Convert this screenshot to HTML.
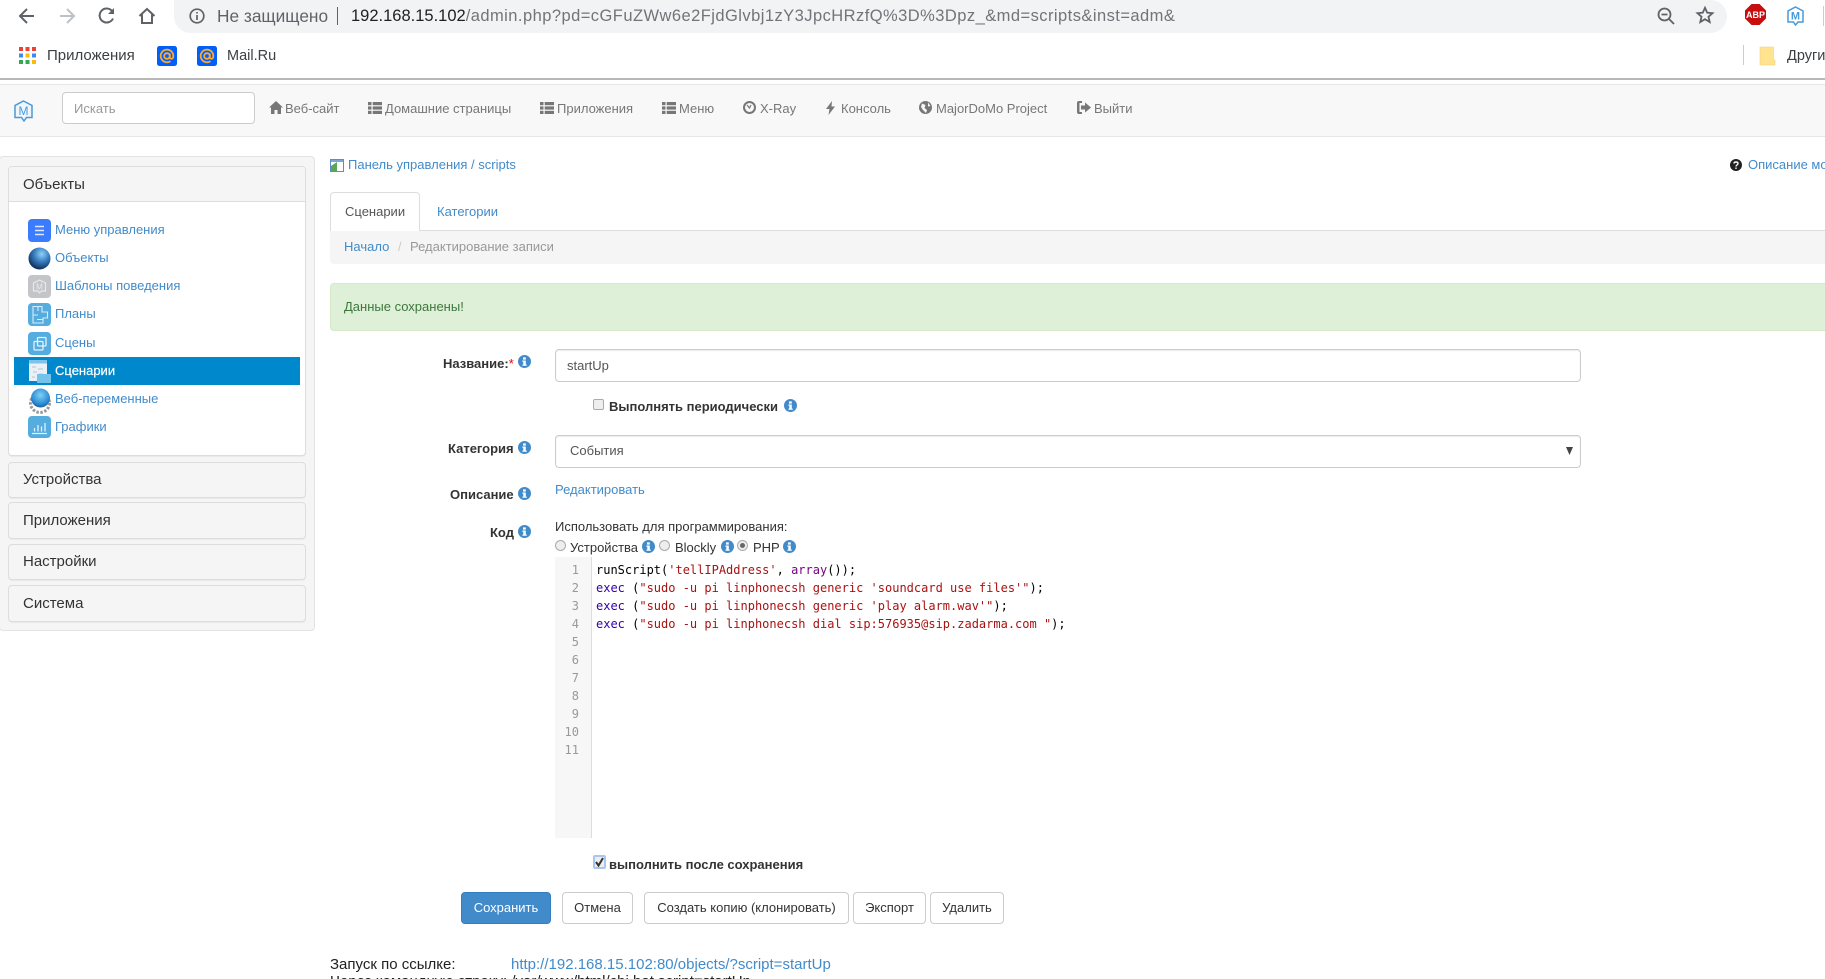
<!DOCTYPE html>
<html lang="ru">
<head>
<meta charset="utf-8">
<title>scripts</title>
<style>
html,body{margin:0;padding:0;background:#fff;width:1825px;height:979px;overflow:hidden;font-family:"Liberation Sans",Arial,sans-serif;font-size:13px;color:#333}
#w{position:relative;width:1825px;height:979px;overflow:hidden}
.a{position:absolute}
.t{position:absolute;white-space:nowrap;line-height:20px;height:20px;margin-top:1px}
.t.c{margin-top:0}
a,.l{color:#428bca;text-decoration:none}
.n{color:#777}
.b{font-weight:bold}
svg{position:absolute;display:block;overflow:visible}
.panel{position:absolute;left:8px;width:298px;background:#f5f5f5;border:1px solid #ddd;border-radius:4px;box-shadow:0 1px 1px rgba(0,0,0,.05);box-sizing:border-box}
.ph{position:absolute;left:23px;font-size:15px;line-height:20px;white-space:nowrap;color:#333;margin-top:1px}
.btn{position:absolute;top:892px;height:32px;line-height:29px;box-sizing:border-box;border:1px solid #ccc;border-radius:4px;text-align:center;background:#fff;color:#333;white-space:nowrap}
.code{position:absolute;left:596px;font-family:"DejaVu Sans Mono","Liberation Mono",monospace;font-size:12px;line-height:18px;height:18px;white-space:pre;color:#000}
.ln{position:absolute;left:555px;width:24px;text-align:right;font-family:"DejaVu Sans Mono","Liberation Mono",monospace;font-size:12px;line-height:18px;color:#999}
.s{color:#a11}.k{color:#30a}.f{color:#708}
.sel{position:absolute;left:555px;width:1026px;height:33px;box-sizing:border-box;border:1px solid #ccc;border-radius:4px;background:#fff;box-shadow:inset 0 1px 1px rgba(0,0,0,.075)}
</style>
</head>
<body>
<div id="w">
<svg width="0" height="0" style="position:absolute">
<defs>
<symbol id="info" viewBox="0 0 13 13"><circle cx="6.500" cy="6.500" r="6.500" fill="#428bca"/><rect x="5" y="2.400" width="2.800" height="2.200" fill="#fff"/><path d="M4.400 5.500H7.800V9.600H8.800V10.800H4.400V9.600H5.300V6.700H4.400Z" fill="#fff"/></symbol>
<symbol id="list" viewBox="0 0 14 12"><g fill="#777"><rect x="0" y="0" width="3.500" height="3.200"/><rect x="0" y="4.400" width="3.500" height="3.200"/><rect x="0" y="8.800" width="3.500" height="3.200"/><rect x="4.700" y="0" width="9.300" height="3.200"/><rect x="4.700" y="4.400" width="9.300" height="3.200"/><rect x="4.700" y="8.800" width="9.300" height="3.200"/></g></symbol>
</defs>
</svg>

<!-- Browser chrome -->
<div class="a" style="left:174px;top:0;width:1553px;height:33px;background:#f1f3f4;border-radius:0 17px 17px 17px"></div>
<svg style="left:17px;top:7px" width="20" height="18" viewBox="0 0 20 18" fill="none" stroke="#5f6368" stroke-width="2"><path d="M17 9H3M10 2L3 9L10 16"/></svg>
<svg style="left:58px;top:7px" width="20" height="18" viewBox="0 0 20 18" fill="none" stroke="#bdc1c6" stroke-width="2"><path d="M2 9H16M9 2L16 9L9 16"/></svg>
<svg style="left:98px;top:7px" width="18" height="18" viewBox="0 0 18 18" fill="none" stroke="#5f6368" stroke-width="2"><path d="M15 11.500A7 7 0 1 1 14 4"/><path d="M16 1V7H10" fill="#5f6368" stroke="none"/></svg>
<svg style="left:138px;top:7px" width="18" height="18" viewBox="0 0 18 18" fill="none" stroke="#5f6368" stroke-width="2"><path d="M1.500 9L9 2L16.500 9M4 7.500V16H14V7.500"/></svg>
<svg style="left:189px;top:8px" width="16" height="16" viewBox="0 0 16 16" fill="none" stroke="#5f6368" stroke-width="1.700"><circle cx="8" cy="8" r="6.800"/><path d="M8 7V12M8 4V5.500"/></svg>
<div class="t c" style="left:217px;top:6px;font-size:17.300px;color:#5f6368">Не защищено</div>
<div class="a" style="left:337px;top:7px;width:1px;height:18px;background:#5f6368"></div>
<div class="t c" style="left:351px;top:6px;font-size:16.500px;color:#70757a"><span style="color:#202124">192.168.15.102</span><span style="letter-spacing:.45px">/admin.php?pd=cGFuZWw6e2FjdGlvbj1zY3JpcHRzfQ%3D%3Dpz_&amp;md=scripts&amp;inst=adm&amp;</span></div>
<svg style="left:1657px;top:7px" width="18" height="18" viewBox="0 0 18 18" fill="none" stroke="#5f6368" stroke-width="1.800"><circle cx="7.500" cy="7.500" r="6"/><path d="M4.500 7.500H10.500M12 12L17 17"/></svg>
<svg style="left:1696px;top:6px" width="18" height="18" viewBox="0 0 18 18" fill="none" stroke="#5f6368" stroke-width="1.800"><path d="M9 1.800L11.200 6.700L16.500 7.200L12.500 10.700L13.700 16L9 13.200L4.300 16L5.500 10.700L1.500 7.200L6.800 6.700Z"/></svg>
<svg style="left:1745px;top:4px" width="21" height="21" viewBox="0 0 21 21"><path d="M6.500 0H14.500L21 6.500V14.500L14.500 21H6.500L0 14.500V6.500Z" fill="#c70d0d"/><text x="10.500" y="14" font-family="Liberation Sans" font-weight="bold" font-size="9" text-anchor="middle" fill="#fff">ABP</text></svg>
<svg style="left:1787px;top:6px" width="17" height="20" viewBox="0 0 17 20" fill="#fff" stroke="#4a9ad8" stroke-width="1.500"><path d="M8.500 1L16 5V16H11L8.500 19L6.500 16H1V5Z"/><text x="8.500" y="13.500" font-family="Liberation Sans" font-weight="bold" font-size="11" text-anchor="middle" fill="#4a9ad8" stroke="none">M</text></svg>
<div class="a" style="left:1823px;top:6px;width:1px;height:20px;background:#ccc"></div>

<!-- Bookmarks -->
<svg style="left:19px;top:47px" width="17" height="17" viewBox="0 0 17 17"><rect x="0" y="0" width="4" height="4" fill="#ea4335"/><rect x="6.500" y="0" width="4" height="4" fill="#ea4335"/><rect x="13" y="0" width="4" height="4" fill="#ea4335"/><rect x="0" y="6.500" width="4" height="4" fill="#4285f4"/><rect x="6.500" y="6.500" width="4" height="4" fill="#fbbc05"/><rect x="13" y="6.500" width="4" height="4" fill="#4285f4"/><rect x="0" y="13" width="4" height="4" fill="#34a853"/><rect x="6.500" y="13" width="4" height="4" fill="#34a853"/><rect x="13" y="13" width="4" height="4" fill="#fbbc05"/></svg>
<div class="t c" style="left:47px;top:46px;font-size:15px;color:#3c4043">Приложения</div>
<svg style="left:157px;top:46px" width="20" height="20" viewBox="0 0 20 20"><rect width="20" height="20" rx="2.500" fill="#005ff9"/><circle cx="10" cy="10" r="2.800" fill="none" stroke="#ffa930" stroke-width="1.800"/><path d="M12.800 7.500V11C12.800 13.500 16.300 13.500 16.300 10A6.300 6.300 0 1 0 13.500 15.200" fill="none" stroke="#ffa930" stroke-width="1.800"/></svg>
<svg style="left:197px;top:46px" width="20" height="20" viewBox="0 0 20 20"><rect width="20" height="20" rx="2.500" fill="#005ff9"/><circle cx="10" cy="10" r="2.800" fill="none" stroke="#ffa930" stroke-width="1.800"/><path d="M12.800 7.500V11C12.800 13.500 16.300 13.500 16.300 10A6.300 6.300 0 1 0 13.500 15.200" fill="none" stroke="#ffa930" stroke-width="1.800"/></svg>
<div class="t c" style="left:227px;top:46px;font-size:14.500px;color:#3c4043">Mail.Ru</div>
<div class="a" style="left:1743px;top:45px;width:1px;height:20px;background:#ccc"></div>
<svg style="left:1759px;top:47px" width="16" height="18" viewBox="0 0 16 18"><path d="M1 0H14.500V13H16V18H1Z" fill="#ffe38f" stroke="#f3d27a" stroke-width=".6"/></svg>
<div class="t c" style="left:1787px;top:46px;font-size:14.500px;color:#3c4043">Другие</div>
<div class="a" style="left:0;top:78px;width:1825px;height:2px;background:#b8b8b8"></div>

<!-- Navbar -->
<div class="a" style="left:0;top:84px;width:1825px;height:53px;box-sizing:border-box;background:#f8f8f8;border-top:1px solid #e7e7e7;border-bottom:1px solid #e7e7e7"></div>
<svg style="left:14px;top:100px" width="19" height="22" viewBox="0 0 19 22" fill="#eef6fc" stroke="#4a9ad8" stroke-width="1.500"><path d="M9.500 1L18 5.500V17.500H12.500L10 21L7.500 17.500H1V5.500Z"/><text x="9.500" y="15" font-family="Liberation Sans" font-size="12" text-anchor="middle" fill="#4a9ad8" stroke="none">M</text></svg>
<div class="a" style="left:62px;top:92px;width:193px;height:32px;box-sizing:border-box;background:#fff;border:1px solid #ccc;border-radius:4px"></div>
<div class="t" style="left:74px;top:98px;color:#999">Искать</div>

<svg style="left:269px;top:101px" width="14" height="13" viewBox="0 0 14 13"><path d="M7 0L14 6.500H12V13H8.500V9H5.500V13H2V6.500H0Z" fill="#777"/></svg>
<div class="t n" style="left:285px;top:98px">Веб-сайт</div>
<svg style="left:368px;top:102px" width="14" height="12"><use href="#list"/></svg>
<div class="t n" style="left:385px;top:98px">Домашние страницы</div>
<svg style="left:540px;top:102px" width="14" height="12"><use href="#list"/></svg>
<div class="t n" style="left:557px;top:98px">Приложения</div>
<svg style="left:662px;top:102px" width="14" height="12"><use href="#list"/></svg>
<div class="t n" style="left:679px;top:98px">Меню</div>
<svg style="left:743px;top:101px" width="13" height="13" viewBox="0 0 13 13" fill="none" stroke="#777" stroke-width="2"><circle cx="6.500" cy="6.500" r="5.500"/><path d="M4 4L6.500 7L8 4" stroke-width="1.200"/></svg>
<div class="t n" style="left:760px;top:98px">X-Ray</div>
<svg style="left:826px;top:101px" width="9" height="14" viewBox="0 0 9 14"><path d="M6 0L0 8H3.500L2.500 14L9 5.500H5.500Z" fill="#777"/></svg>
<div class="t n" style="left:841px;top:98px">Консоль</div>
<svg style="left:919px;top:101px" width="13" height="13" viewBox="0 0 13 13"><circle cx="6.500" cy="6.500" r="6.500" fill="#777"/><path d="M3 2.500L6.500 4L5.500 7L8 9L7 12L4 9L2 6ZM9 1.500L11.500 5L9 5.500Z" fill="#f8f8f8"/></svg>
<div class="t n" style="left:936px;top:98px">MajorDoMo Project</div>
<svg style="left:1077px;top:101px" width="14" height="13" viewBox="0 0 14 13"><path d="M5 0H2A2 2 0 0 0 0 2V11A2 2 0 0 0 2 13H5V11H2.500V2H5Z" fill="#777"/><path d="M4 4.500H8V1.500L14 6.500L8 11.500V8.500H4Z" fill="#777"/></svg>
<div class="t n" style="left:1094px;top:98px">Выйти</div>

<!-- Sidebar -->
<div class="a" style="left:-1px;top:156px;width:316px;height:475px;box-sizing:border-box;background:#f5f5f5;border:1px solid #e3e3e3;border-radius:4px"></div>
<div class="panel" style="top:166px;height:290px;background:#fff"></div>
<div class="a" style="left:9px;top:167px;width:296px;height:35px;background:#f5f5f5;border-bottom:1px solid #ddd;border-radius:3px 3px 0 0;box-sizing:border-box"></div>
<div class="ph" style="top:174px">Объекты</div>

<div class="a" style="left:14px;top:357px;width:286px;height:28px;background:#0088cc"></div>

<svg style="left:28px;top:219px" width="23" height="23" viewBox="0 0 23 23"><rect width="23" height="23" rx="4" fill="#3b7cff"/><path d="M7 7.500H16M7 11.500H16M7 15.500H16" stroke="#dbe8ff" stroke-width="1.500"/></svg>
<div class="t l" style="left:55px;top:219px">Меню управления</div>

<svg style="left:28px;top:247px" width="23" height="23" viewBox="0 0 23 23"><defs><radialGradient id="g1" cx=".6" cy=".3" r=".7"><stop offset="0" stop-color="#8fd3f5"/><stop offset=".5" stop-color="#3a7cc0"/><stop offset="1" stop-color="#0f2f5a"/></radialGradient></defs><circle cx="11.500" cy="11.500" r="11" fill="url(#g1)"/></svg>
<div class="t l" style="left:55px;top:247px">Объекты</div>

<svg style="left:28px;top:275px" width="23" height="23" viewBox="0 0 23 23"><rect width="23" height="23" rx="4" fill="#c4c5c9"/><path d="M11.500 5L17.500 8V16H13.500L11.500 18L10 16H5.500V8Z" fill="none" stroke="#e9e9eb" stroke-width="1.200"/><text x="11.500" y="14.500" font-family="Liberation Sans" font-size="8" text-anchor="middle" fill="#e9e9eb">M</text></svg>
<div class="t l" style="left:55px;top:275px">Шаблоны поведения</div>

<svg style="left:28px;top:303px" width="23" height="23" viewBox="0 0 23 23"><rect width="23" height="23" rx="4" fill="#55acde"/><path d="M5 3.500H14V9H19.500V15H15V20H5ZM10 3.500V8M5 12H10M9 16.500H15" fill="none" stroke="#d5ecf9" stroke-width="1.100"/></svg>
<div class="t l" style="left:55px;top:303px">Планы</div>

<svg style="left:28px;top:332px" width="23" height="23" viewBox="0 0 23 23"><rect width="23" height="23" rx="4" fill="#55acde"/><rect x="6" y="9.500" width="9" height="8.500" rx="1" fill="none" stroke="#e2f2fb" stroke-width="1.300"/><rect x="9.500" y="5.500" width="8.500" height="8.500" rx="1" fill="none" stroke="#e2f2fb" stroke-width="1.300"/></svg>
<div class="t l" style="left:55px;top:332px">Сцены</div>

<svg style="left:29px;top:360px" width="22" height="23" viewBox="0 0 22 23"><rect width="18" height="21" fill="#e9f1f6"/><rect width="18" height="3.500" fill="#7fc3ea"/><path d="M3 7H7M9 9H14M4 12H8M10 14H14M3 17H6" stroke="#b8c4cc" stroke-width="1"/><rect x="8" y="14" width="14" height="9" fill="#74c3ea"/></svg>
<div class="t" style="left:55px;top:360px;color:#fff;-webkit-text-stroke:.2px #fff">Сценарии</div>

<svg style="left:28px;top:388px" width="24" height="23" viewBox="0 0 24 23"><defs><radialGradient id="g2" cx=".5" cy=".35" r=".65"><stop offset="0" stop-color="#7fd0f5"/><stop offset=".7" stop-color="#2f8fd6"/><stop offset="1" stop-color="#1d5f9f"/></radialGradient></defs><circle cx="12" cy="15" r="9.500" fill="none" stroke="#9a9a9a" stroke-width="3" stroke-dasharray="2.500 1.500"/><circle cx="12.500" cy="10" r="9.500" fill="url(#g2)"/></svg>
<div class="t l" style="left:55px;top:388px">Веб-переменные</div>

<svg style="left:28px;top:416px" width="23" height="22" viewBox="0 0 23 22"><rect width="23" height="22" rx="4" fill="#55acde"/><path d="M4 17.500H19M6.500 15.500V12M10 15.500V9M13.500 15.500V10.500M17 15.500V7" stroke="#e2f2fb" stroke-width="1.300" fill="none"/></svg>
<div class="t l" style="left:55px;top:416px">Графики</div>

<div class="panel" style="top:462px;height:36px"></div>
<div class="ph" style="top:469px">Устройства</div>
<div class="panel" style="top:502px;height:37px"></div>
<div class="ph" style="top:510px">Приложения</div>
<div class="panel" style="top:544px;height:36px"></div>
<div class="ph" style="top:551px">Настройки</div>
<div class="panel" style="top:585px;height:37px"></div>
<div class="ph" style="top:593px">Система</div>

<!-- Header of content -->
<svg style="left:330px;top:159px" width="14" height="13" viewBox="0 0 14 13"><rect x=".5" y=".5" width="13" height="12" fill="#fff" stroke="#5b8fc4"/><rect x="1" y="1" width="12" height="2" fill="#7aa7d6"/><path d="M1 7L7 3V12H1Z" fill="#5aa55a"/></svg>
<div class="t l" style="left:348px;top:154px">Панель управления / scripts</div>
<svg style="left:1730px;top:159px" width="12" height="12" viewBox="0 0 12 12"><circle cx="6" cy="6" r="6" fill="#222"/><path d="M4 4.500C4 2.500 8 2.500 8 4.500C8 6 6 6 6 7.500" fill="none" stroke="#fff" stroke-width="1.400"/><rect x="5.300" y="8.500" width="1.400" height="1.400" fill="#fff"/></svg>
<div class="t l" style="left:1748px;top:154px">Описание модуля</div>

<!-- Tabs -->
<div class="a" style="left:330px;top:230px;width:1495px;height:1px;background:#ddd"></div>
<div class="a" style="left:330px;top:192px;width:90px;height:39px;box-sizing:border-box;background:#fff;border:1px solid #ddd;border-bottom:0;border-radius:4px 4px 0 0"></div>
<div class="t" style="left:345px;top:201px;color:#555">Сценарии</div>
<div class="t l" style="left:437px;top:201px">Категории</div>

<div class="a" style="left:330px;top:231px;width:1495px;height:33px;background:#f5f5f5;border-radius:0 0 0 4px"></div>
<div class="t l" style="left:344px;top:236px">Начало</div>
<div class="t" style="left:398px;top:236px;color:#ccc">/</div>
<div class="t" style="left:410px;top:236px;color:#999">Редактирование записи</div>

<div class="a" style="left:330px;top:283px;width:1500px;height:48px;box-sizing:border-box;background:#dff0d8;border:1px solid #d6e9c6;border-radius:4px"></div>
<div class="t" style="left:344px;top:296px;color:#3c763d">Данные сохранены!</div>

<!-- Form -->
<div class="t b" style="left:443px;top:353px">Название:<span style="color:#e00;font-weight:normal">*</span></div>
<svg style="left:518px;top:355px" width="13" height="13"><use href="#info"/></svg>
<div class="sel" style="top:349px"></div>
<div class="t" style="left:567px;top:355px;color:#555">startUp</div>

<div class="a" style="left:593px;top:399px;width:11px;height:11px;box-sizing:border-box;background:#eee;border:1px solid #aaa;border-radius:2px"></div>
<div class="t b" style="left:609px;top:396px">Выполнять периодически</div>
<svg style="left:784px;top:399px" width="13" height="13"><use href="#info"/></svg>

<div class="t b" style="left:448px;top:438px">Категория</div>
<svg style="left:518px;top:441px" width="13" height="13"><use href="#info"/></svg>
<div class="sel" style="top:435px"></div>
<div class="t" style="left:570px;top:440px;color:#555">События</div>
<svg style="left:1566px;top:447px" width="7" height="8" viewBox="0 0 7 8"><path d="M0 0H7L3.500 8Z" fill="#444"/></svg>

<div class="t b" style="left:450px;top:484px">Описание</div>
<svg style="left:518px;top:487px" width="13" height="13"><use href="#info"/></svg>
<div class="t l" style="left:555px;top:479px">Редактировать</div>

<div class="t b" style="left:490px;top:522px">Код</div>
<svg style="left:518px;top:525px" width="13" height="13"><use href="#info"/></svg>
<div class="t" style="left:555px;top:516px">Использовать для программирования:</div>

<div class="a" style="left:555px;top:540px;width:11px;height:11px;box-sizing:border-box;background:#eee;border:1px solid #aaa;border-radius:50%"></div>
<div class="t" style="left:570px;top:537px">Устройства</div>
<svg style="left:642px;top:540px" width="13" height="13"><use href="#info"/></svg>
<div class="a" style="left:659px;top:540px;width:11px;height:11px;box-sizing:border-box;background:#eee;border:1px solid #aaa;border-radius:50%"></div>
<div class="t" style="left:675px;top:537px">Blockly</div>
<svg style="left:721px;top:540px" width="13" height="13"><use href="#info"/></svg>
<div class="a" style="left:737px;top:540px;width:11px;height:11px;box-sizing:border-box;background:#eee;border:1px solid #aaa;border-radius:50%"></div>
<div class="a" style="left:740px;top:543px;width:5px;height:5px;background:#666;border-radius:50%"></div>
<div class="t" style="left:753px;top:537px">PHP</div>
<svg style="left:783px;top:540px" width="13" height="13"><use href="#info"/></svg>

<!-- Code editor -->
<div class="a" style="left:555px;top:557px;width:37px;height:281px;box-sizing:border-box;background:#f7f7f7;border-right:1px solid #ddd"></div>
<div class="ln" style="top:561px">1</div>
<div class="ln" style="top:579px">2</div>
<div class="ln" style="top:597px">3</div>
<div class="ln" style="top:615px">4</div>
<div class="ln" style="top:633px">5</div>
<div class="ln" style="top:651px">6</div>
<div class="ln" style="top:669px">7</div>
<div class="ln" style="top:687px">8</div>
<div class="ln" style="top:705px">9</div>
<div class="ln" style="top:723px">10</div>
<div class="ln" style="top:741px">11</div>
<div class="code" style="top:561px">runScript(<span class="s">'tellIPAddress'</span>, <span class="f">array</span>());</div>
<div class="code" style="top:579px"><span class="k">exec</span> (<span class="s">"sudo -u pi linphonecsh generic 'soundcard use files'"</span>);</div>
<div class="code" style="top:597px"><span class="k">exec</span> (<span class="s">"sudo -u pi linphonecsh generic 'play alarm.wav'"</span>);</div>
<div class="code" style="top:615px"><span class="k">exec</span> (<span class="s">"sudo -u pi linphonecsh dial sip:576935@sip.zadarma.com "</span>);</div>

<!-- Execute checkbox -->
<div class="a" style="left:593px;top:855px;width:13px;height:14px;box-sizing:border-box;background:#eee;border:2px solid #a9c7ee;border-radius:2px"></div>
<svg style="left:595px;top:857px" width="9" height="10" viewBox="0 0 9 10"><path d="M1 5L3.500 8.500L8 1" fill="none" stroke="#333" stroke-width="2"/></svg>
<div class="t b" style="left:609px;top:854px">выполнить после сохранения</div>

<!-- Buttons -->
<div class="btn" style="left:461px;width:90px;background:#428bca;border-color:#357ebd;color:#fff">Сохранить</div>
<div class="btn" style="left:562px;width:71px">Отмена</div>
<div class="btn" style="left:644px;width:205px">Создать копию (клонировать)</div>
<div class="btn" style="left:853px;width:73px">Экспорт</div>
<div class="btn" style="left:930px;width:74px">Удалить</div>

<!-- Footer -->
<div class="t" style="left:330px;top:954px;font-size:15px;color:#222">Запуск по ссылке:</div>
<div class="t l" style="left:511px;top:954px;font-size:15px">http://192.168.15.102:80/objects/?script=startUp</div>
<div class="t" style="left:330px;top:971px;font-size:15px;color:#222">Через командную строку: /var/www/html/cbi.bat script=startUp</div>
</div>
</body>
</html>
